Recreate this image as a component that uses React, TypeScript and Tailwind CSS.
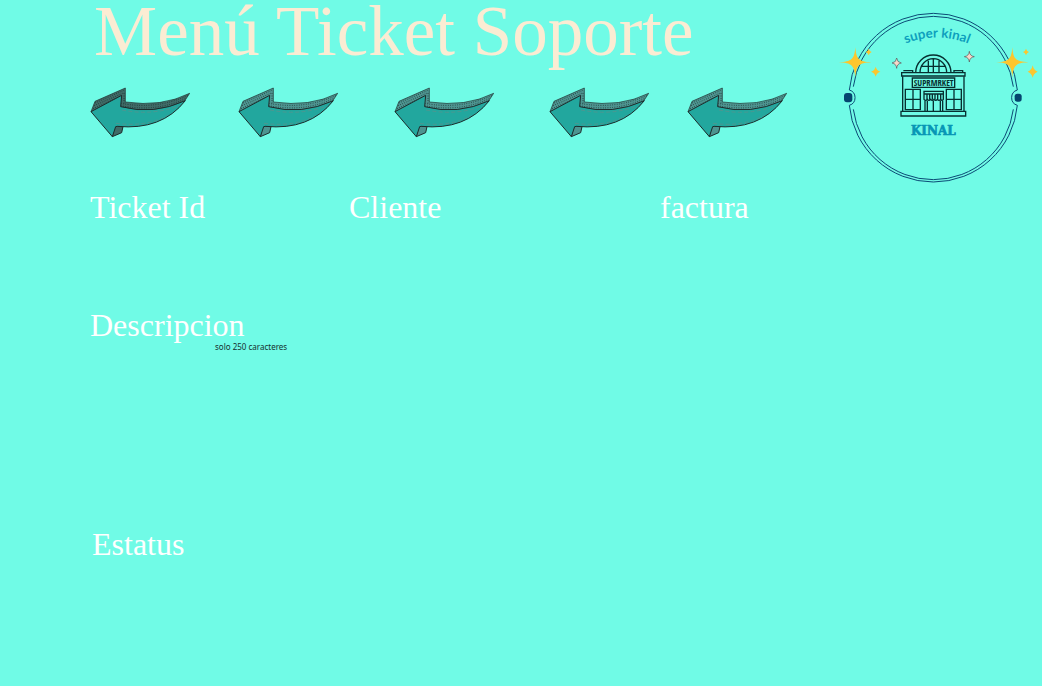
type ArrowProps = { shade: string };

function Arrow({ shade }: ArrowProps) {
  return (
    <svg viewBox="30 18 300 156" className="h-[52px] w-[100px] shrink-0" aria-hidden="true">
      <path
        d="M33 95 L45 64 L136 24 L136 66 Q245 82 329 40 L312 66 Q220 110 115 80 L90 80 Z"
        fill={shade}
        stroke="#1d2b2b"
        strokeWidth="2"
      />
      <path
        d="M45 69 L134 30 M42 77 L130 39 M39 86 L126 47 M132 40 V70 M122 70 Q230 90 325 46 M122 77 Q230 98 320 54"
        fill="none"
        stroke="#1d2b2b"
        strokeWidth="3"
        strokeDasharray="2 5"
      />
      <path d="M97 170 L103 138 L129 140 L125 158 Z" fill={shade} stroke="#1d2b2b" strokeWidth="3" />
      <path
        d="M33 95 L125 46 L122 80 Q220 106 316 62 Q245 152 112 139 L107 140 L97 170 Z"
        fill="#22a79e"
        stroke="#1d2b2b"
        strokeWidth="3"
        strokeLinejoin="round"
      />
      <path
        d="M126 90 Q215 108 296 78 M108 130 Q200 142 262 106"
        fill="none"
        stroke="#5f8f89"
        strokeWidth="2"
        strokeDasharray="12 7"
      />
    </svg>
  );
}

function Logo() {
  return (
    <svg viewBox="0 0 618 570" className="h-[190px] w-[206px] shrink-0" role="img" aria-label="Super Kinal">
      <g fill="none" stroke="#0b4a75" strokeWidth="3">
        <path d="M40 270 A253 253 0 0 1 292 40 A253 253 0 0 1 544 270 A24 24 0 0 0 544 316 A253 253 0 0 1 292 546 A253 253 0 0 1 40 316 A24 24 0 0 0 40 270" />
        <path d="M52 260 A242 242 0 0 1 532 260" />
        <path d="M52 328 A242 242 0 0 0 532 328" />
      </g>
      <rect x="24" y="279" width="25" height="28" rx="9" fill="#04456f" />
      <rect x="536" y="281" width="21" height="24" rx="8" fill="#04456f" />
      <g fill="#fcc62e">
        <path d="M58 142 C61 178 68 185 106 187 C68 189 61 196 58 232 C55 196 48 189 8 187 C48 185 55 178 58 142Z" />
        <path d="M58 160 Q62 183 83 187 Q62 191 58 213 Q54 191 33 187 Q54 183 58 160Z" />
        <path d="M98 146 Q100 154 107 156 Q100 158 98 166 Q96 158 89 156 Q96 154 98 146Z" />
        <path d="M119 200 Q122 212 133 215 Q122 218 119 230 Q116 218 105 215 Q116 212 119 200Z" />
        <path d="M529 142 C532 178 539 185 577 187 C539 189 532 196 529 232 C526 196 519 189 481 187 C519 185 526 178 529 142Z" />
        <path d="M529 160 Q533 183 554 187 Q533 191 529 213 Q525 191 504 187 Q525 183 529 160Z" />
        <path d="M570 146 Q572 154 579 156 Q572 158 570 166 Q568 158 561 156 Q568 154 570 146Z" />
        <path d="M590 196 Q593 211 605 215 Q593 219 590 233 Q587 219 575 215 Q587 211 590 196Z" />
      </g>
      <g fill="#f8d8c8" stroke="#5b5256" strokeWidth="2">
        <path d="M182 174 Q183 187 196 189 Q183 191 182 205 Q181 191 168 189 Q181 187 182 174Z" />
        <path d="M400 154 Q401 168 415 170 Q401 172 400 186 Q399 172 385 170 Q399 168 400 154Z" />
      </g>
      <path id="arc" d="M195 137 Q303 88 411 137" fill="none" />
      <text
        fill="#0d9fbd"
        fontSize="40"
        fontWeight="700"
        textAnchor="middle"
        className="font-['Lato',sans-serif]"
      >
        <textPath href="#arc" startOffset="50%">
          super kinal
        </textPath>
      </text>
      <g transform="translate(162 150)" fill="none" stroke="#062f30" strokeWidth="4">
        <path d="M77 68 A53 53 0 0 1 183 68" />
        <path d="M90 68 A40 42 0 0 1 170 68 M96 49 H164 M115 32 V68 M130 27 V68 M147 32 V68" />
        <path d="M35 68 H225 V78 H35 Z M40 62 H68 V68 M192 68 V62 H218 V68" />
        <path d="M38 79 V184 M222 79 V184" />
        <path d="M67 84 H194 V112 H67 Z" />
        <path d="M46 118 H91 V179 H46 Z M69 118 V179 M46 148 H91" />
        <path d="M169 118 H214 V179 H169 Z M192 118 V179 M169 148 H214" />
        <path d="M102 124 H160 V132 H102 Z M102 132 V148 Q107 154 112 148 Q117 154 122 148 Q127 154 132 148 Q137 154 142 148 Q147 154 152 148 Q156 154 160 148 V132" />
        <path d="M111 132 V149 M119 132 V149 M127 132 V149 M135 132 V149 M143 132 V149 M152 132 V149 M105 152 V184 M112 152 V184 M130 152 V184 M151 152 V184 M158 152 V184" />
        <path d="M33 184 H227 V198 H33 Z" />
      </g>
      <text
        x="293"
        y="257"
        fill="#062f30"
        fontSize="26"
        fontWeight="700"
        textAnchor="middle"
        className="font-['Liberation_Sans_Narrow','Open_Sans_Condensed',sans-serif]"
      >
        SUPRMRKET
      </text>
      <text
        x="292"
        y="405"
        fill="#0796b5"
        stroke="#0796b5"
        strokeWidth="2"
        fontSize="36"
        fontWeight="700"
        textAnchor="middle"
        className="font-['DejaVu_Serif',serif]"
      >
        KINAL
      </text>
    </svg>
  );
}

const heading = "text-[32px] leading-[34px] text-white";

export default function App() {
  return (
    <main className="min-h-screen bg-[#70fbe6] font-['Liberation_Serif',serif]">
      <header className="flex justify-between">
        <div className="min-w-0 pl-[90px]">
          <h1 className="pl-1 text-[71px] leading-[62px] whitespace-nowrap text-[#fbecd3]">Menú Ticket Soporte</h1>
          <div className="mt-6 grid grid-cols-[148px_156px_155px_138px_100px]">
            <Arrow shade="#3f6b67" />
            <Arrow shade="#4d9490" />
            <Arrow shade="#4d9490" />
            <Arrow shade="#4d9490" />
            <Arrow shade="#4d9490" />
          </div>
        </div>
        <Logo />
      </header>

      <section className="grid grid-cols-[259px_311px_1fr] pl-[90px]">
        <h2 className={heading}>Ticket Id</h2>
        <h2 className={heading}>Cliente</h2>
        <h2 className={heading}>factura</h2>
      </section>

      <section className="mt-[84px] pl-[90px]">
        <h2 className={heading}>Descripcion</h2>
        <p className="pl-[125px] font-['Noto_Sans',sans-serif] text-[8px] leading-[10px] text-[#16302f]">
          solo 250 caracteres
        </p>
      </section>

      <section className="mt-[175px] pl-[92px]">
        <h2 className={heading}>Estatus</h2>
      </section>
    </main>
  );
}
